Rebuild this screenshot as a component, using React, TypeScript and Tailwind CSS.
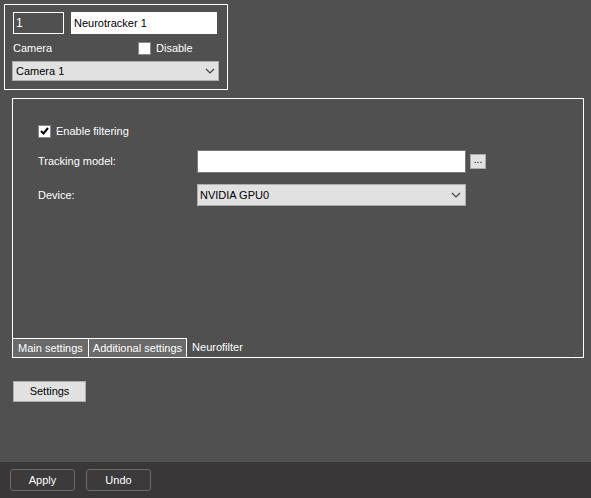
import React from 'react';

const Chevron: React.FC = () => (
  <svg width="10" height="6" viewBox="0 0 10 6" className="text-[#444]">
    <path d="M1 1 L5 5 L9 1" fill="none" stroke="currentColor" strokeWidth="1.2" />
  </svg>
);

const App: React.FC = () => {
  return (
    <div
      className="relative w-[591px] h-[498px] bg-[#505050] text-white text-[11px] overflow-hidden flex flex-col"
      style={{ fontFamily: '"Liberation Sans", Arial, sans-serif' }}
    >
      <div className="flex-1 pl-[4px] pt-[4px]">
        {/* Top object box */}
        <div className="w-[224px] h-[86px] border border-white px-[8px] pt-[7px]">
          <div className="flex gap-[7px]">
            <div className="w-[51px] h-[22px] border border-white px-[2px] leading-[20px] text-[12px]">1</div>
            <div className="w-[146px] h-[22px] bg-white text-black border border-white px-[2px] leading-[20px]">
              Neurotracker 1
            </div>
          </div>
          <div className="flex items-center h-[20px] mt-[4px]">
            <span className="w-[125px]">Camera</span>
            <span className="w-[13px] h-[13px] bg-white border border-[#888]" />
            <span className="ml-[5px]">Disable</span>
          </div>
          <div className="mt-[3px] -ml-[1px] w-[207px] h-[20px] bg-[#e1e1e1] border border-[#adadad] text-black flex items-center justify-between px-[3px]">
            <span>Camera 1</span>
            <Chevron />
          </div>
        </div>

        {/* Main panel */}
        <div className="relative ml-[8px] mt-[8px] w-[572px] h-[260px] border border-white flex flex-col">
          <div className="flex-1 pl-[25px] pt-[25px]">
            <div className="flex items-center h-[14px]">
              <span className="w-[13px] h-[13px] bg-white border border-[#888] flex items-center justify-center">
                <svg width="9" height="8" viewBox="0 0 9 8">
                  <path d="M1 4 L3.5 6.5 L8 1" fill="none" stroke="#000" strokeWidth="2" />
                </svg>
              </span>
              <span className="ml-[5px]">Enable filtering</span>
            </div>
            <div className="flex items-center mt-[12px]">
              <span className="w-[159px]">Tracking model:</span>
              <div className="w-[269px] h-[23px] bg-white border border-[#7a7a7a]" />
              <div className="ml-[4px] w-[16px] h-[15px] bg-[#e1e1e1] border border-[#adadad] text-black text-[10px] leading-[10px] flex justify-center">
                ...
              </div>
            </div>
            <div className="flex items-center mt-[11px]">
              <span className="w-[159px]">Device:</span>
              <div className="w-[269px] h-[22px] bg-[#e1e1e1] border border-[#adadad] text-black flex items-center justify-between px-[2px] pr-[4px]">
                <span>NVIDIA GPU0</span>
                <Chevron />
              </div>
            </div>
          </div>
          <div className="flex h-[19px] items-stretch">
            <div className="bg-[#6a6a6a] border-t border-r border-white px-[5px] leading-[18px]">Main settings</div>
            <div className="bg-[#6a6a6a] border-t border-r border-white px-[4px] leading-[18px]">Additional settings</div>
            <div className="px-[5px] leading-[18px]">Neurofilter</div>
          </div>
          <div className="absolute right-[1px] bottom-[1px] text-[#6a6a6a] text-[8px] leading-[8px]">⋰</div>
        </div>

        <div className="ml-[9px] mt-[23px] w-[73px] h-[21px] bg-[#e1e1e1] border border-[#adadad] text-black flex items-center justify-center">
          Settings
        </div>
      </div>

      {/* Bottom bar */}
      <div className="h-[36px] bg-[#393737] flex items-center gap-[11px] pl-[10px]">
        <div className="w-[65px] h-[22px] rounded-[3px] border border-[#6a6a6a] bg-[#3c3a3a] flex items-center justify-center">
          Apply
        </div>
        <div className="w-[65px] h-[22px] rounded-[3px] border border-[#6a6a6a] bg-[#3c3a3a] flex items-center justify-center">
          Undo
        </div>
      </div>
    </div>
  );
};

export default App;
